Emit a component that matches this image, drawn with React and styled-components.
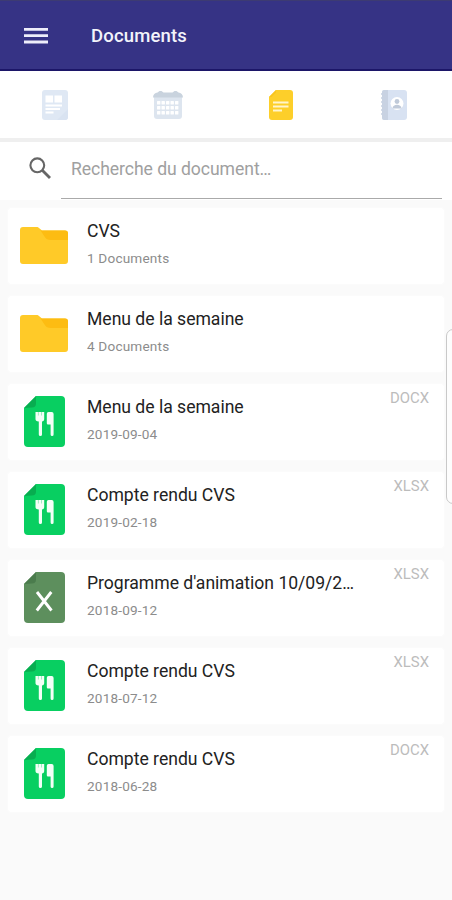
import React from 'react';
import styled, { createGlobalStyle } from 'styled-components';

const GlobalStyle = createGlobalStyle`
  * { box-sizing: border-box; }
  body { margin: 0; background: #fafafa; font-family: Roboto, "Liberation Sans", sans-serif; }
`;

const Screen = styled.div`
  position: relative;
  width: 452px;
  height: 900px;
  overflow: hidden;
  background: #fafafa;
`;

const Header = styled.header`
  display: flex;
  align-items: center;
  height: 71px;
  padding: 2px 0 0 24px;
  gap: 43px;
  background: #363385;
  border-top: 1px solid #3d3b72;
  border-bottom: 2px solid #1c1668;
`;

const MenuButton = styled.button`
  display: flex;
  padding: 0;
  border: 0;
  background: none;
`;

const Heading = styled.h1`
  margin: 0;
  color: #f3f3fb;
  font-size: 18.5px;
  line-height: 24px;
  font-weight: 500;
  letter-spacing: 0.16px;
`;

const Tabs = styled.nav`
  display: grid;
  grid-template-columns: repeat(4, 1fr);
  height: 71px;
  background: #fff;
  border-bottom: 4px solid #efefef;
`;

const Tab = styled.button`
  display: flex;
  align-items: center;
  justify-content: center;
  padding: 0 3px 0 0;
  border: 0;
  background: none;
`;

const SearchBar = styled.div`
  display: flex;
  height: 58px;
  padding: 0 10px 1px 28px;
  background: #fff;
`;

const SearchIcon = styled.svg`
  flex: none;
  margin: 14px 9px 0 0;
`;

const SearchField = styled.div`
  flex: 1;
  padding: 15px 0 0 10px;
  border-bottom: 1px solid #aaa;
  color: #a0a0a0;
  font-size: 17.6px;
  line-height: 24px;
  letter-spacing: -0.06px;
`;

const List = styled.main`
  display: flex;
  flex-direction: column;
  gap: 12px;
  padding: 8px 8px 0;
`;

const Card = styled.article`
  display: flex;
  height: 76px;
  padding: 0 15px 0 12px;
  background: #fff;
  border-radius: 4px;
  box-shadow: 0 0 3px #fdfdfd;
`;

const IconCell = styled.div`
  flex: none;
  display: flex;
  justify-content: center;
  width: 48px;
  padding-top: ${(p) => (p.$folder ? 19 : 12)}px;
`;

const CardText = styled.div`
  flex: none;
  width: 276px;
  margin-left: 19px;
  padding-top: 11px;
`;

const Title = styled.div`
  white-space: nowrap;
  color: #222;
  font-size: 17.6px;
  line-height: 24px;
  letter-spacing: -0.02px;
`;

const Subtitle = styled.div`
  margin-top: 6px;
  color: #8c8c8c;
  font-size: 13.6px;
  line-height: 18px;
  letter-spacing: 0.18px;
`;

const FileType = styled.span`
  margin-left: auto;
  padding-top: 5px;
  color: #bcbcbc;
  font-size: 14.9px;
  line-height: 18px;
`;

const EdgeHandle = styled.div`
  position: absolute;
  top: 329px;
  left: 446px;
  width: 18px;
  height: 175px;
  border: 1px solid #c9c9c9;
  border-radius: 7px;
  background: #fdfdfd;
`;

const HamburgerIcon = () => (
  <svg width="24" height="18" viewBox="0 0 24 18" fill="#eeeefa">
    <path d="M0 1h24v2.8H0zM0 7.3h24v2.8H0zM0 13.6h24v2.8H0z" />
  </svg>
);

const NewsIcon = () => (
  <svg width="26" height="30" viewBox="0 0 26 30">
    <rect width="26" height="30" rx="3" fill="#dfe8f4" />
    <path d="M3.5 5.5h7.5v7H3.5zM12.5 5.5H20v7h-7.5zM3.5 14.5H20v2H3.5zM3.5 18H18v2H3.5zM3.5 21.5h8v2h-8z" fill="#fff" />
    <path d="M26 19v8a3 3 0 0 1-3 3h-8z" fill="#d9e3f1" />
  </svg>
);

const CalendarIcon = () => (
  <svg width="30" height="30" viewBox="0 0 30 30">
    <rect x="1" y="4" width="28" height="25" rx="3" fill="#dde5ef" />
    <path d="M0 7.5c0-3 2-4.500 4.500-5L6.500 1h2l2 1.500h9l2-1.500h2l2 1.500c2.500.5 4.500 2 4.500 5z" fill="#c9d3de" />
    <g fill="#fff">
      {[11, 16, 21].map((y) =>
        [4, 8.5, 13, 17.5, 22].map((x) => <rect key={`${x}-${y}`} x={x} y={y} width="3.4" height="3.6" rx=".5" />)
      )}
    </g>
  </svg>
);

const NoteIcon = () => (
  <svg width="24" height="30" viewBox="0 0 24 30">
    <path d="M7 0h14a3 3 0 0 1 3 3v24a3 3 0 0 1-3 3H3a3 3 0 0 1-3-3V7z" fill="#fdcf2a" />
    <path d="M0 7l7-7v2.500L2.500 7z" fill="#f9c51e" />
    <path d="M4 11.500h15.500v2.100H4zM4 15.500h15.500v2.100H4zM4 19.500h9v2.100H4z" fill="#fff5cc" />
  </svg>
);

const ContactsIcon = () => (
  <svg width="26" height="30" viewBox="0 0 26 30">
    <rect x="1" width="25" height="30" rx="3" fill="#d8e2f2" />
    <path d="M3 0h4v30H3a2 2 0 0 1-2-2V2a2 2 0 0 1 2-2z" fill="#c8d2e2" />
    <path d="M0 4h3M0 8h3M0 12h3M0 16h3M0 20h3M0 24h3" stroke="#c8d2e2" strokeWidth="1.5" />
    <circle cx="16" cy="13.5" r="6.5" fill="#fff" />
    <circle cx="16" cy="11.5" r="2.4" fill="#c0cad9" />
    <path d="M11.500 18.500c0-5 9-5 9 0z" fill="#c0cad9" />
  </svg>
);

const FolderIcon = () => (
  <svg width="48" height="37" viewBox="0 0 48 37">
    <path d="M3 0h13.500c1.200 0 2 .4 2.800 1.200L22 3.500h23a3 3 0 0 1 3 3V34a3 3 0 0 1-3 3H3a3 3 0 0 1-3-3V3a3 3 0 0 1 3-3z" fill="#ffca28" />
    <path d="M20.500 3.500H45a3 3 0 0 1 3 3V13H31c-3 0-5-.8-6.500-3.500z" fill="#fdbc12" />
  </svg>
);

const FileIcon = ({ kind }) => {
  const menu = kind === 'menu';
  return (
    <svg width="41" height="51" viewBox="0 0 41 51">
      <path d="M12 0h25a4 4 0 0 1 4 4v43a4 4 0 0 1-4 4H4a4 4 0 0 1-4-4V12z" fill={menu ? '#08cf61' : '#5d8f5d'} />
      <path d="M0 12L12 0v7.500a4 4 0 0 1-4 4z" fill={menu ? '#08ad50' : '#4b7c4d'} />
      {menu ? (
        <g fill="#f3fff7">
          <path d="M11.500 16h8.700v7c0 1.500-.8 2.200-2.200 2.500v13a1.600 1.600 0 0 1-3.200 0v-13c-2.500-.3-3.300-1-3.300-2.500z" />
          <path d="M13.900 16h.8v3.500h-.8zM17.100 16h.8v3.500h-.8z" fill="#8fe8b6" />
          <path d="M24.500 16h3.200a1.900 1.900 0 0 1 1.900 1.900v20.600a1.500 1.500 0 0 1-3 0v-10H24a1.200 1.200 0 0 1-1.200-1.200v-9.600a1.700 1.700 0 0 1 1.700-1.700z" />
        </g>
      ) : (
        <path d="M13 20l14.500 18.500M27.300 20l-14.500 18.500" stroke="#fff" strokeWidth="2.9" fill="none" />
      )}
    </svg>
  );
};

const tabs = [
  { label: 'Actualités', Icon: NewsIcon },
  { label: 'Calendrier', Icon: CalendarIcon },
  { label: 'Documents', Icon: NoteIcon },
  { label: 'Contacts', Icon: ContactsIcon },
];

const documents = [
  { kind: 'folder', title: 'CVS', detail: '1 Documents' },
  { kind: 'folder', title: 'Menu de la semaine', detail: '4 Documents' },
  { kind: 'menu', title: 'Menu de la semaine', detail: '2019-09-04', type: 'DOCX' },
  { kind: 'menu', title: 'Compte rendu CVS', detail: '2019-02-18', type: 'XLSX' },
  { kind: 'sheet', title: "Programme d'animation 10/09/2…", detail: '2018-09-12', type: 'XLSX' },
  { kind: 'menu', title: 'Compte rendu CVS', detail: '2018-07-12', type: 'XLSX' },
  { kind: 'menu', title: 'Compte rendu CVS', detail: '2018-06-28', type: 'DOCX' },
];

export default function App() {
  return (
    <Screen>
      <GlobalStyle />
      <Header>
        <MenuButton><HamburgerIcon /></MenuButton>
        <Heading>Documents</Heading>
      </Header>
      <Tabs>
        {tabs.map(({ label, Icon }) => (
          <Tab key={label}><Icon /></Tab>
        ))}
      </Tabs>
      <SearchBar>
        <SearchIcon width="24" height="24" viewBox="0 0 24 24" fill="none" stroke="#666">
          <circle cx="9.3" cy="9.3" r="6.9" strokeWidth="2.1" />
          <path d="M14 14l8 8" strokeWidth="2.9" />
        </SearchIcon>
        <SearchField>Recherche du document…</SearchField>
      </SearchBar>
      <List>
        {documents.map((doc, i) => (
          <Card key={i}>
            <IconCell $folder={doc.kind === 'folder'}>
              {doc.kind === 'folder' ? <FolderIcon /> : <FileIcon kind={doc.kind} />}
            </IconCell>
            <CardText>
              <Title>{doc.title}</Title>
              <Subtitle>{doc.detail}</Subtitle>
            </CardText>
            {doc.type && <FileType>{doc.type}</FileType>}
          </Card>
        ))}
      </List>
      <EdgeHandle />
    </Screen>
  );
}
